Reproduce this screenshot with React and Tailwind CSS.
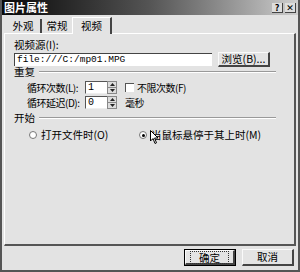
import React from 'react';

const font = { fontFamily: '"Noto Sans CJK SC", "DejaVu Sans", sans-serif' };

function Spin({ value }) {
  return (
    <div className="flex items-stretch h-[13px]">
      <div className="w-[22px] bg-white border-t border-l border-[#555] border-b border-b-[#eee] px-[2px] text-[10px] leading-[11px] font-mono">
        {value}
      </div>
      <div className="w-[10px] flex flex-col border border-[#888] bg-[#ddd]">
        <div className="flex-1 flex items-center justify-center border-b border-[#888]">
          <svg width="5" height="3" viewBox="0 0 5 3"><path d="M2.5 0 L5 3 L0 3 Z" fill="#222" /></svg>
        </div>
        <div className="flex-1 flex items-center justify-center">
          <svg width="5" height="3" viewBox="0 0 5 3"><path d="M0 0 L5 0 L2.5 3 Z" fill="#222" /></svg>
        </div>
      </div>
    </div>
  );
}

function Btn({ children, className = '' }) {
  return (
    <div className={`flex items-center justify-center whitespace-nowrap bg-[#e4e4e4] border-t border-l border-[#fafafa] border-r-2 border-b-2 border-r-[#444] border-b-[#444] text-[10.5px] ${className}`}>
      {children}
    </div>
  );
}

function Group({ title }) {
  return (
    <div className="flex items-center gap-[4px] pr-[18px] h-[10px]">
      <span className="text-[10.5px] leading-[10px]">{title}</span>
      <div className="flex-1 flex flex-col">
        <div className="h-px bg-[#999]" />
        <div className="h-px bg-white" />
      </div>
    </div>
  );
}

export default function App() {
  return (
    <div className="w-[300px] h-[272px] bg-[#e3e3e3] text-black flex flex-col border-l-2 border-r-2 border-b-2 border-[#555] overflow-hidden whitespace-nowrap" style={font}>
      {/* title bar */}
      <div className="h-[15px] flex items-center bg-gradient-to-r from-[#0a0a0a] via-[#555] to-[#cfcfcf] pl-[2px] pr-[2px]">
        <span className="text-white font-bold text-[11px] leading-none">图片属性</span>
        <div className="ml-auto flex gap-[2px]">
          <div className="w-[11px] h-[10px] bg-[#ddd] border-r border-b border-[#444] text-[9px] leading-[9px] font-bold flex justify-center">?</div>
          <div className="w-[11px] h-[10px] bg-[#ddd] border-r border-b border-[#444] text-[9px] leading-[9px] font-bold flex justify-center">✕</div>
        </div>
      </div>

      {/* tabs */}
      <div className="flex items-end h-[17px] mt-[1px] pl-[4px] text-[10.5px]">
        <div className="h-[14px] w-[36px] flex items-center justify-center border-r-2 border-[#444]">外观</div>
        <div className="h-[14px] w-[30px] flex items-center justify-center">常规</div>
        <div className="h-[17px] w-[40px] flex items-center justify-center border-t border-l border-white border-r-2 border-r-[#444] bg-[#e3e3e3] -mb-px relative z-10">视频</div>
      </div>

      {/* panel */}
      <div className="mx-[2px] h-[213px] border-t border-l border-white border-r-2 border-b-2 border-r-[#555] border-b-[#555] pl-[9px] pt-[4px] flex flex-col">
        <span className="text-[10.5px] leading-[14px]">视频源(I):</span>
        <div className="flex items-center gap-[6px] pr-[18px]">
          <div className="w-[198px] h-[13px] bg-white border-t border-l border-[#444] text-[9.5px] leading-[11px] pl-[2px]" style={{ fontFamily: '"Liberation Mono", monospace' }}>
            file:///C:/mp01.MPG
          </div>
          <Btn className="w-[52px] h-[15px]">浏览(B)...</Btn>
        </div>

        <Group title="重复" />

        <div className="pl-[13px] flex flex-col gap-[1px] mt-[3px] text-[10px] tracking-[-0.5px]">
          <div className="flex items-center h-[14px]">
            <span className="w-[58px]">循环次数(L):</span>
            <Spin value="1" />
            <div className="ml-[8px] w-[9px] h-[9px] bg-white border-t border-l border-[#555]" />
            <span className="ml-[3px]">不限次数(F)</span>
          </div>
          <div className="flex items-center h-[14px]">
            <span className="w-[58px]">循环延迟(D):</span>
            <Spin value="0" />
            <span className="ml-[8px]">毫秒</span>
          </div>
        </div>

        <div className="mt-[4px]"><Group title="开始" /></div>

        <div className="flex items-center mt-[5px] pl-[15px] text-[10.5px] h-[14px]">
          <div className="flex items-center w-[110px]">
            <div className="w-[8px] h-[8px] rounded-full bg-white border border-[#777]" />
            <span className="ml-[4px]">打开文件时(O)</span>
          </div>
          <div className="flex items-center relative">
            <div className="w-[8px] h-[8px] rounded-full bg-white border border-[#777] flex items-center justify-center">
              <div className="w-[3px] h-[3px] rounded-full bg-black" />
            </div>
            <span className="ml-[4px]">当鼠标悬停于其上时(M)</span>
            <svg className="absolute left-[11px] top-[3px]" width="9" height="15" viewBox="0 0 9 15">
              <path d="M0.5 0.5 L0.5 11 L3 8.5 L5 13.5 L6.5 12.8 L4.6 8 L8 8 Z" fill="white" stroke="black" strokeWidth="1" />
            </svg>
          </div>
        </div>
      </div>

      {/* bottom buttons */}
      <div className="flex justify-end gap-[6px] pr-[4px] mt-[3px]">
        <div className="border border-black">
          <Btn className="w-[50px] h-[15px]"><span className="border border-dotted border-[#333] px-[8px] leading-[11px]">确定</span></Btn>
        </div>
        <Btn className="w-[52px] h-[17px]">取消</Btn>
      </div>
    </div>
  );
}
